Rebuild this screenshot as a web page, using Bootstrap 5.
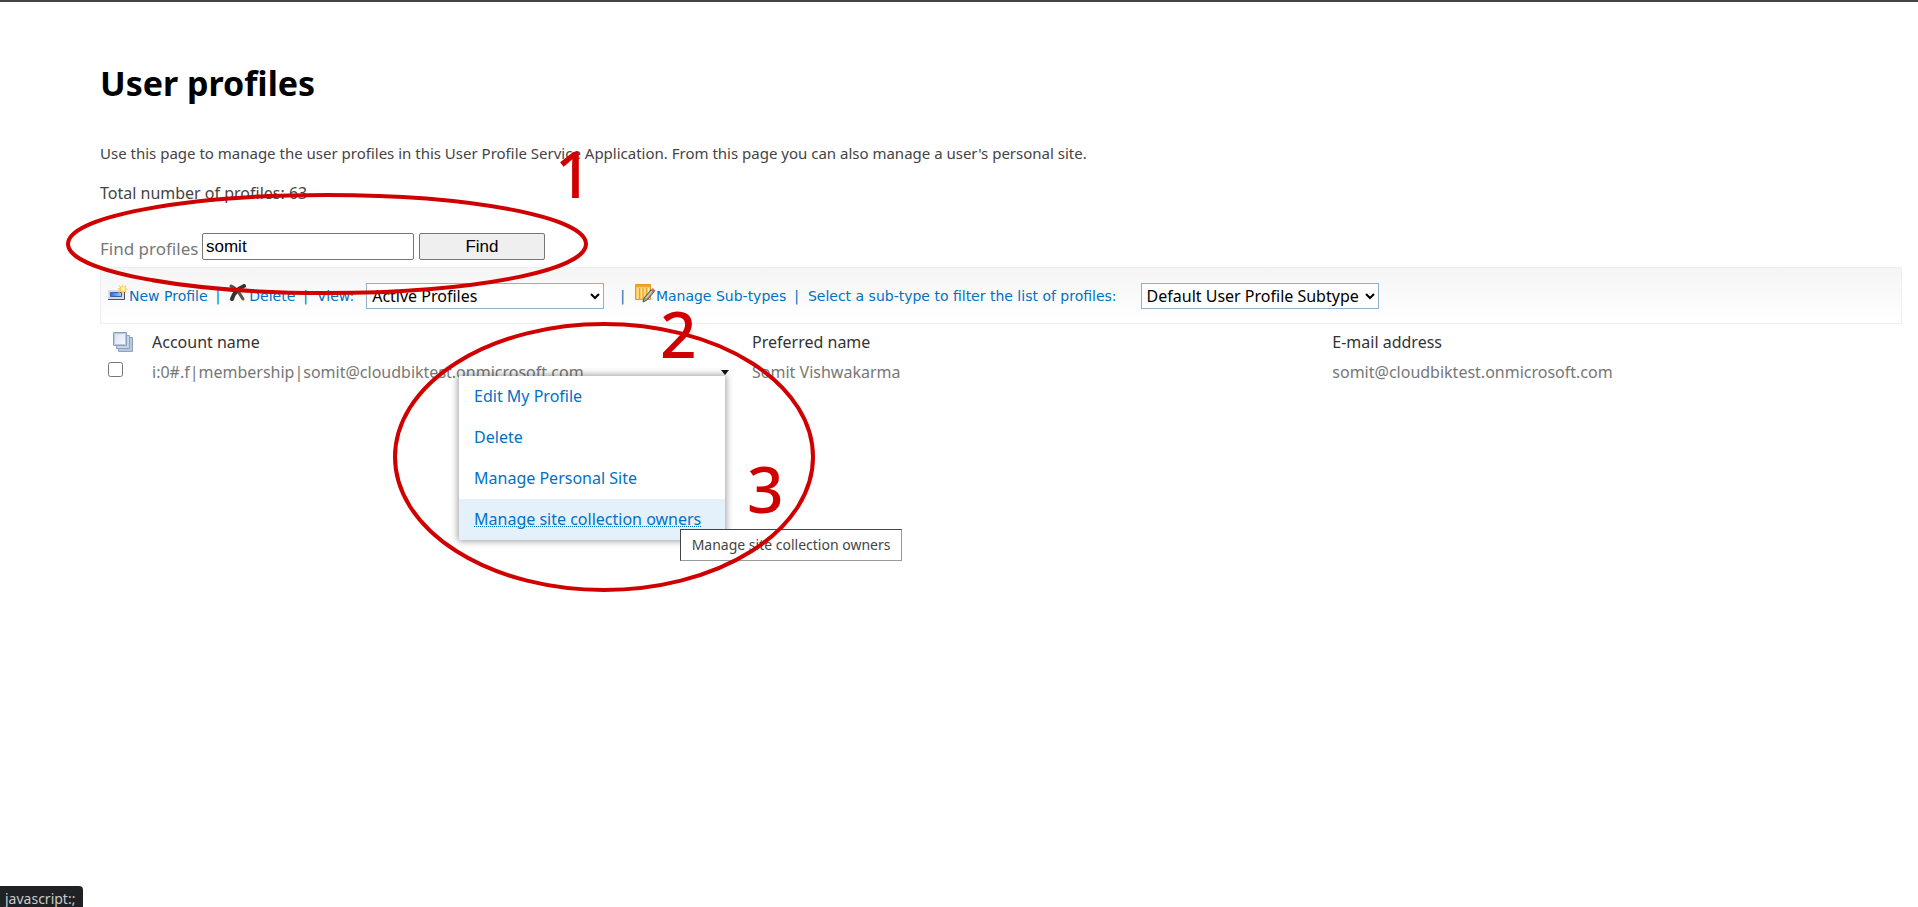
<!DOCTYPE html>
<html lang="en">
<head>
<meta charset="utf-8">
<meta name="viewport" content="width=device-width, initial-scale=1">
<title>User profiles</title>
<link href="https://cdn.jsdelivr.net/npm/bootstrap@5.3.0/dist/css/bootstrap.min.css" rel="stylesheet">
<style>
body{font-family:"Noto Sans","Open Sans",sans-serif;font-size:16px;line-height:24px;color:#777;background:#fff}
.page-wrap{border-top:2px solid #444;min-height:100vh;padding:0 16px 0 100px}
.page-title{font-size:34px;line-height:48px;font-weight:700;color:#000;margin:0;padding-top:57px}
.intro{font-size:15px;line-height:24px;color:#444;padding-top:34px;margin:0}
.total{color:#444;padding-top:16px;margin:0}
.find-row{padding-top:28px;gap:5px}
.find-row label{font-size:17px;line-height:27px;padding-top:2px;width:97px;white-space:nowrap}
.find-row input,.find-row button{font:17px/21px "Liberation Sans",Arial,sans-serif;color:#000;height:27px;border:1px solid #767676;border-radius:2px}
.find-row input{width:212px;padding:0 3px}
.find-row button{width:126px;background:#efefef;padding:0}
.tool-strip{margin-top:5px;height:57px;border:1px solid #eee;background:linear-gradient(#f5f5f5,#fff);padding:0 6px;font:14px/24px "DejaVu Sans",Verdana,sans-serif;color:#0072c6;white-space:nowrap}
.tool-strip a,.menu-pop a{color:#0072c6;text-decoration:none}
.tool-strip a{display:flex;align-items:center}
.tool-strip svg{margin-top:-6px;flex:none}
.tool-strip select{font:16px/24px "Noto Sans",sans-serif;color:#000;height:26px;border:1px solid #92b0c8;background:#fff;padding:0 1px;width:238px}
.tool-strip .bar{padding:0 9px 0 8px}
.tool-strip .view-label{margin-right:12px}
.profiles{width:100%;table-layout:fixed}
.profiles th,.profiles td{padding:0;height:24px;font-weight:400;vertical-align:middle}
.profiles th{color:#333;height:36px}
.col-tick{width:52px}.col-account{width:33.3%}.col-name{width:32.2%}
.profiles th svg{margin-left:12px;display:block}
.profiles input{width:15px;height:15px;margin:0 0 6px 8px;display:block}
.account{position:relative}
.menu-pop{position:absolute;right:27px;top:16px;width:266px;background:#fff;box-shadow:0 0 7px 1px rgba(0,0,0,.4);z-index:2}
.menu-pop a{display:block;height:41px;line-height:41px;padding-left:15px}
.menu-pop a.current{background:#e5f1fa;text-decoration:underline dotted 1px;text-underline-offset:1px}
.drop-arrow{position:absolute;right:23px;top:10px;border:0;padding:0;background:none;line-height:0}
.tip{position:absolute;left:221px;top:153px;width:222px;height:32px;border:1px solid #444;border-right-color:#999;border-bottom-color:#999;background:#fff;color:#444;font-size:14px;line-height:30px;text-align:center;white-space:nowrap}
.status{position:fixed;left:0;bottom:0;width:83px;height:21px;background:#202124;color:#c8cacd;border-radius:0 4px 0 0;font-size:14px;line-height:26px;padding-left:5px;overflow:hidden}
.marks{position:absolute;left:0;top:0;pointer-events:none;z-index:5}
</style>
</head>
<body>
<main class="page-wrap">
  <h1 class="page-title">User profiles</h1>
  <p class="intro">Use this page to manage the user profiles in this User Profile Service Application. From this page you can also manage a user's personal site.</p>
  <p class="total">Total number of profiles: 63</p>
  <form class="find-row d-flex" onsubmit="return false">
    <label for="find">Find profiles</label>
    <input id="find" type="text" value="somit">
    <button type="submit">Find</button>
  </form>

  <div class="tool-strip d-flex align-items-center">
    <a href="#"><svg width="22" height="18" viewBox="0 0 22 18"><defs><linearGradient id="g1" x2="1" y2="0"><stop stop-color="#2f6fd8"/><stop offset="1" stop-color="#a9c8f5"/></linearGradient></defs><path d="M1 6h16v9H1z" fill="#d5dae3"/><path d="M1 15.500h16.500V8" fill="none" stroke="#4a5468"/><path d="M3.500 8.500h11v4h-11z" fill="url(#g1)" stroke="#3561ad"/><path d="M15.500 0l1 3 3-2-1 3.200 3 .8-3 1.200 1.500 3-3.200-1.400-1.300 3-1-3-3 1.200 1.400-3-2.900-1 2.900-1.300L11.500 1l3 1.800z" fill="#f7d349"/><circle cx="16" cy="5" r="2" fill="#fff6b8"/></svg>New Profile</a>
    <span class="bar">|</span>
    <a href="#"><svg width="20" height="18" viewBox="0 0 20 18"><path d="M2 2c5 2 8 6 12 13" stroke="#555" stroke-width="3" stroke-linecap="round" fill="none"/><path d="M15 2C10 4 5 9 3 15" stroke="#333" stroke-width="4" stroke-linecap="round" fill="none"/></svg>Delete</a>
    <span class="bar">|</span>
    <label for="view" class="view-label">View:</label>
    <select id="view"><option>Active Profiles</option></select>
    <span class="bar ms-2">|</span>
    <a href="#"><svg width="22" height="20" viewBox="0 0 22 20"><path d="M1.500 1.500h15v15h-15z" fill="#fcc85a" stroke="#e39a1f"/><path d="M2 3h14" stroke="#f2a52c" stroke-width="2"/><path d="M5.500 5v11M9 5v11M12.500 5v11" stroke="#e9a02b"/><path d="M4 5v11M7.500 5v11M11 5v11M14.500 5v9" stroke="#ffeab0"/><path d="M9 19l1-4 7-8 3 2-7 8z" fill="#a8a48c" stroke="#555"/><path d="M12 15l6-7" stroke="#e0dcc4"/><path d="M17 7l1.500-2 3 2.500-1.500 2z" fill="#b86f5c"/></svg>Manage Sub-types</a>
    <span class="bar">|</span>
    <label for="subtype" class="me-4">Select a sub-type to filter the list of profiles:</label>
    <select id="subtype"><option>Default User Profile Subtype</option></select>
  </div>

  <table class="profiles">
    <colgroup><col class="col-tick"><col class="col-account"><col class="col-name"><col></colgroup>
    <thead><tr>
      <th><svg width="22" height="22" viewBox="0 0 22 22"><defs><linearGradient id="g2" x2="1" y2="1"><stop stop-color="#d3e0f0"/><stop offset="1" stop-color="#fafcff"/></linearGradient></defs><path d="M6.500 6.500h14v14h-14z" fill="#b9c9dd" stroke="#8fa3c0"/><path d="M4.500 4.500h13v13h-13z" fill="#c6d4e5" stroke="#8fa3c0"/><path d="M1.500 1.500h13v13h-13z" fill="url(#g2)" stroke="#8ba1c1"/><path d="M2.500 2.500h11v11h-11z" fill="none" stroke="#b7c6db"/></svg></th>
      <th>Account name</th><th>Preferred name</th><th>E-mail address</th>
    </tr></thead>
    <tbody><tr>
      <td><input type="checkbox" aria-label="Select profile"></td>
      <td class="account">i:0#.f|membership|somit@cloudbiktest.onmicrosoft.com
        <button class="drop-arrow" aria-label="Open menu"><svg width="8" height="5"><path d="M0 0h8L4 5z" fill="#111"/></svg></button>
        <div class="menu-pop">
          <a href="#">Edit My Profile</a><a href="#">Delete</a><a href="#">Manage Personal Site</a><a href="#" class="current">Manage site collection owners</a>
          <div class="tip" role="tooltip">Manage site collection owners</div>
        </div>
      </td>
      <td>Somit Vishwakarma</td><td>somit@cloudbiktest.onmicrosoft.com</td>
    </tr></tbody>
  </table>
</main>
<div class="status">javascript:;</div>
<svg class="marks" width="900" height="620" viewBox="0 0 900 620">
  <g fill="none" stroke="#d00000" stroke-width="4"><ellipse cx="327" cy="244" rx="259" ry="49"/><ellipse cx="604" cy="457" rx="209" ry="133"/></g>
  <g fill="#d00000" font-family="Noto Sans, sans-serif" font-size="64" font-weight="500"><text x="555" y="198">1</text><text x="660" y="358">2</text><text x="747" y="513">3</text></g>
</svg>
<script src="https://cdn.jsdelivr.net/npm/bootstrap@5.3.0/dist/js/bootstrap.bundle.min.js"></script>
</body>
</html>
